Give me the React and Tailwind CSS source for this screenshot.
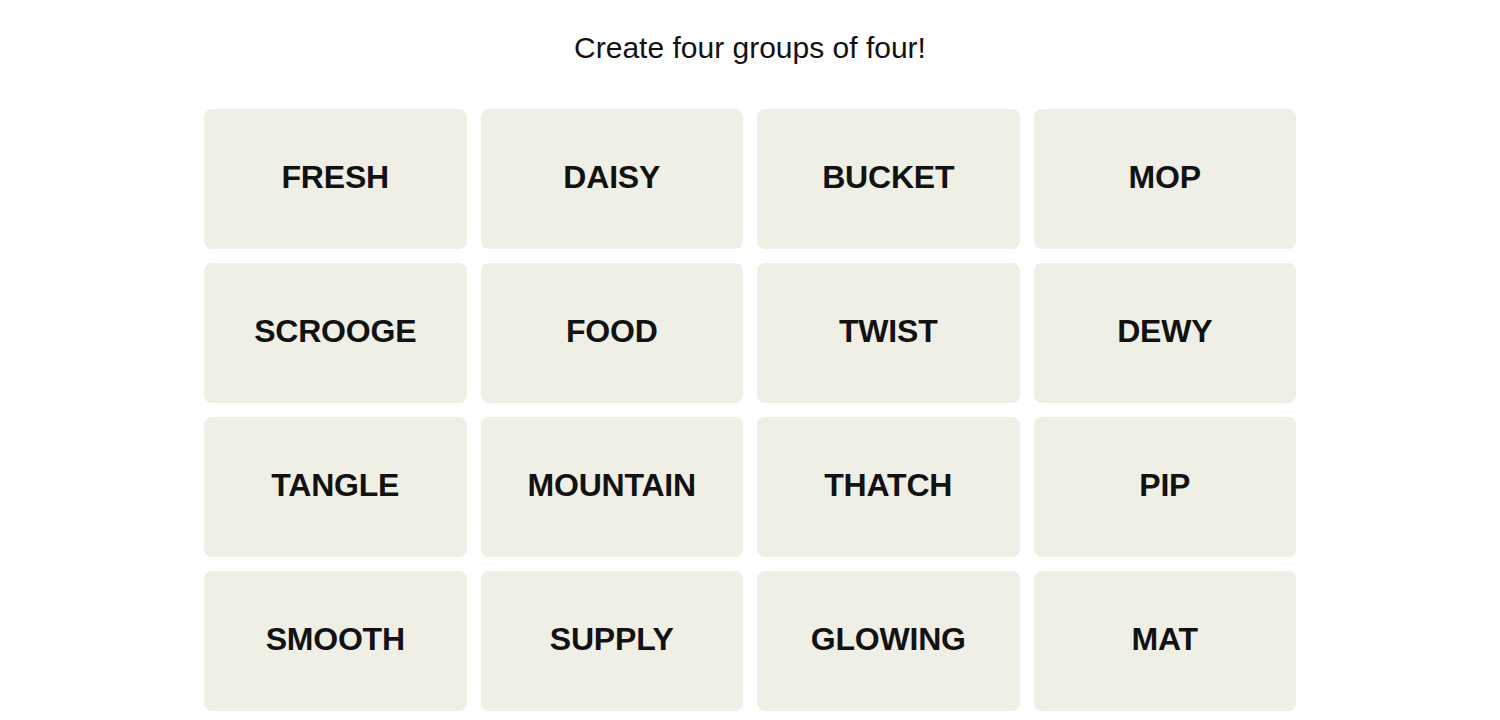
import React from 'react';

const words = [
    'FRESH', 'DAISY', 'BUCKET', 'MOP',
    'SCROOGE', 'FOOD', 'TWIST', 'DEWY',
    'TANGLE', 'MOUNTAIN', 'THATCH', 'PIP',
    'SMOOTH', 'SUPPLY', 'GLOWING', 'MAT',
];

const App = () => {
    return (
        <div className="min-h-screen bg-white font-['Liberation_Sans',Arial,sans-serif] text-[#121212]">
            <div className="w-[1092px] mx-auto pt-[30px]">
                <h1 className="text-center text-[30px] leading-[36px] font-normal">Create four groups of four!</h1>

                <div className="mt-[43px] grid grid-cols-4 gap-x-[14px] gap-y-[14px]">
                    {words.map((w) => (
                        <button
                            key={w}
                            className="h-[140px] rounded-lg bg-[#efefe6] flex items-center justify-center text-[32px] font-bold tracking-[-0.2px] pb-[5px]"
                        >
                            {w}
                        </button>
                    ))}
                </div>
            </div>
        </div>
    );
};

export default App;
